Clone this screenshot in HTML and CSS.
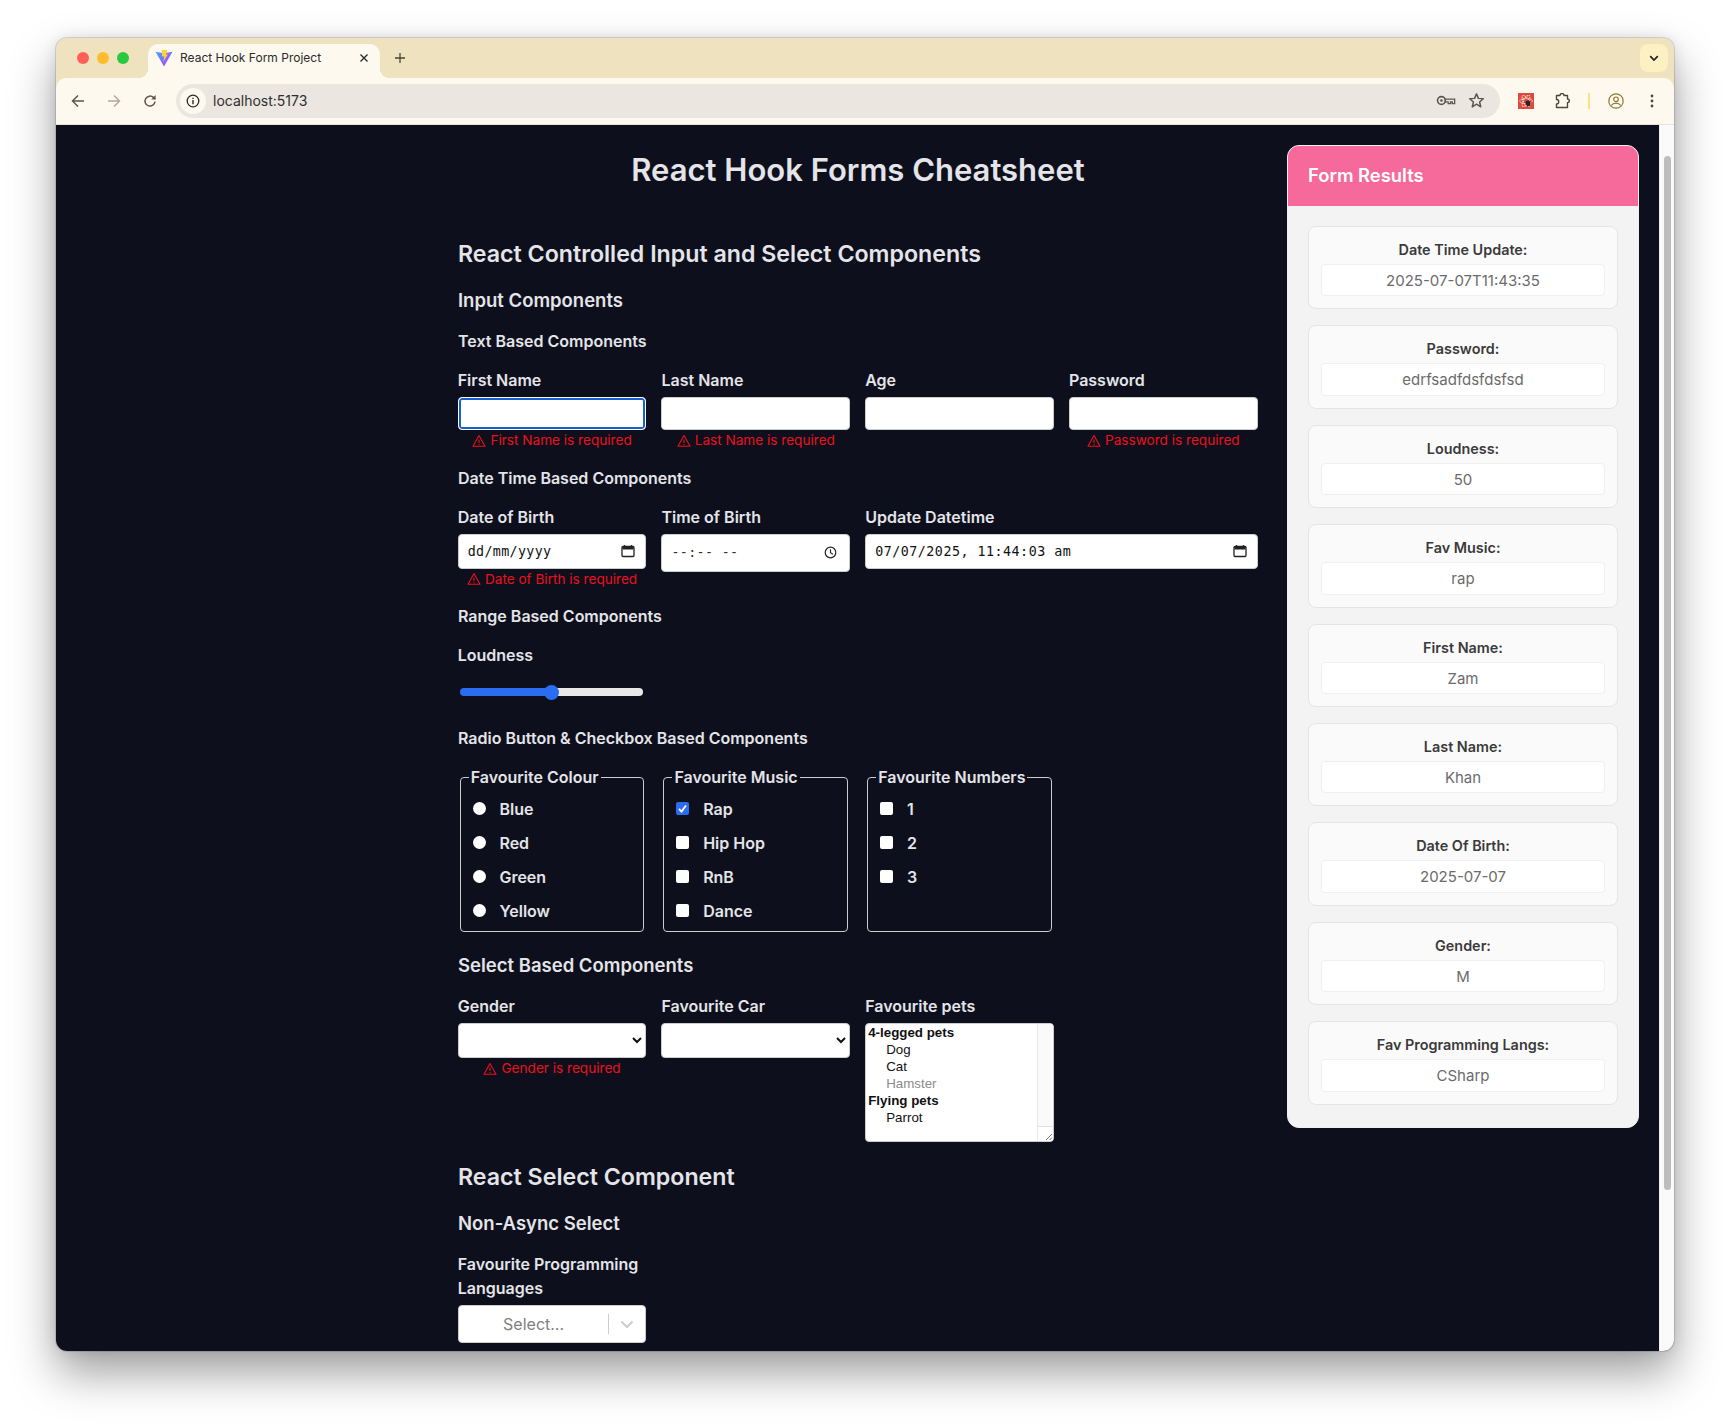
FILE: index.html
```html
<!DOCTYPE html>
<html lang="en">
<head>
    <meta charset="UTF-8">
    <meta name="viewport" content="width=device-width, initial-scale=1.0">
    <title>React Hook Form Project</title>
    <link rel="stylesheet" href="styles.css">
</head>
<body>

<svg class="icon-defs" width="0" height="0">
    <symbol id="warn" viewBox="0 0 14 14">
        <path d="M7 1.600 13 12.200H1Z" fill="none" stroke="currentColor" stroke-width="1.100" stroke-linejoin="round"/>
        <path d="M7 5.400v3.600M7 10v1" fill="none" stroke="currentColor" stroke-width="1.100"/>
    </symbol>
    <symbol id="calendar" viewBox="0 0 14 14">
        <path d="M2 2.500h10a1 1 0 0 1 1 1v8a1 1 0 0 1-1 1H2a1 1 0 0 1-1-1v-8a1 1 0 0 1 1-1Z" fill="none" stroke="#222" stroke-width="1.300"/>
        <path d="M1.500 3h11v2.500h-11Z" fill="#222"/>
        <path d="M3.500 1v2M10.500 1v2" stroke="#222" stroke-width="1.300"/>
    </symbol>
</svg>

<div class="window">
    <div class="tabstrip">
        <div class="lights">
            <span class="light light-red"></span>
            <span class="light light-yellow"></span>
            <span class="light light-green"></span>
        </div>
        <div class="tab">
            <svg class="favicon" width="18" height="18" viewBox="0 0 17 17">
                <defs>
                    <linearGradient id="vite-a" x1="0" y1="0" x2="1" y2="1">
                        <stop offset="0" stop-color="#41a6ff"/>
                        <stop offset="1" stop-color="#bd34fe"/>
                    </linearGradient>
                </defs>
                <path d="M.5 2.500 8.500 4l8-1.500-8 14Z" fill="url(#vite-a)"/>
                <path d="M6.200 1h5.600l-1.600 4.500 2-.6-4.400 7.200 1-5.300-2 .4Z" fill="#ffd62e"/>
            </svg>
            <span class="tab-title">React Hook Form Project</span>
            <svg class="tab-close" width="10" height="10" viewBox="0 0 10 10">
                <path d="M1.500 1.500l7 7M8.500 1.500l-7 7" stroke="#2b2b2b" stroke-width="1.400"/>
            </svg>
        </div>
        <svg class="new-tab" width="12" height="12" viewBox="0 0 12 12">
            <path d="M6 1v10M1 6h10" stroke="#4a4636" stroke-width="1.300"/>
        </svg>
        <div class="tab-search">
            <svg width="10" height="7" viewBox="0 0 10 7">
                <path d="M1.200 1.200 5 5l3.800-3.800" fill="none" stroke="#222" stroke-width="1.700"/>
            </svg>
        </div>
    </div>

    <div class="toolbar">
        <svg class="nav-icon" width="14" height="14" viewBox="0 0 14 14">
            <path d="M13 7H2M7 1.500 1.500 7 7 12.500" fill="none" stroke="#5c5845" stroke-width="1.500"/>
        </svg>
        <svg class="nav-icon" width="14" height="14" viewBox="0 0 14 14">
            <path d="M1 7h11M7 1.500 12.500 7 7 12.500" fill="none" stroke="#b0ac9c" stroke-width="1.500"/>
        </svg>
        <svg class="nav-icon" width="14" height="14" viewBox="0 0 14 14">
            <path d="M12 7.500A5 5 0 1 1 10.400 3.400L12.200 5" fill="none" stroke="#5c5845" stroke-width="1.500"/>
            <path d="M12.600 1v4.400H8.200Z" fill="#5c5845"/>
        </svg>
        <div class="address">
            <span class="site-info">
                <svg width="14" height="14" viewBox="0 0 14 14">
                    <circle cx="7" cy="7" r="5.800" fill="none" stroke="#2c2c2c" stroke-width="1.300"/>
                    <path d="M7 6v4.200M7 3.700v1.200" stroke="#2c2c2c" stroke-width="1.400"/>
                </svg>
            </span>
            <span class="url">localhost:5173</span>
            <svg class="key-icon" width="20" height="13" viewBox="0 0 18 12">
                <circle cx="4.800" cy="6" r="3.600" fill="none" stroke="#5b5750" stroke-width="1.500"/>
                <circle cx="4.800" cy="6" r="1.200" fill="#5b5750"/>
                <path d="M8.400 4.800h8.600v4h-2.200V7.200h-1.600v1.600h-2.200V7.200H8.400Z" fill="none" stroke="#5b5750" stroke-width="1.200"/>
            </svg>
            <svg class="star-icon" width="17" height="17" viewBox="0 0 16 16">
                <path d="M8 1.800 9.800 6l4.600.4-3.500 3 1.100 4.500L8 11.500l-4 2.400 1.100-4.500-3.500-3L6.200 6Z" fill="none" stroke="#5b5750" stroke-width="1.400" stroke-linejoin="round"/>
            </svg>
        </div>
        <svg class="ext-icon" width="16" height="16" viewBox="0 0 16 16">
            <rect width="16" height="16" fill="#dd4b3f"/>
            <ellipse cx="8" cy="8" rx="6.300" ry="2.600" fill="none" stroke="#fbdcd8" stroke-width="1" stroke-dasharray="1.500 .8"/>
            <ellipse cx="8" cy="8" rx="6.300" ry="2.600" fill="none" stroke="#fbdcd8" stroke-width="1" stroke-dasharray="1.500 .8" transform="rotate(60 8 8)"/>
            <ellipse cx="8" cy="8" rx="6.300" ry="2.600" fill="none" stroke="#fbdcd8" stroke-width="1" stroke-dasharray="1.500 .8" transform="rotate(120 8 8)"/>
            <path d="M7.500 8.500l3-1.500 2 2-.5 4-2.500.5-2-2.500Z" fill="#2b2320"/>
        </svg>
        <svg class="puzzle-icon" width="16" height="16" viewBox="0 0 16 16">
            <path d="M1.500 2.500h3.500a2 2 0 0 1 4 0h3.500v3.500a1.800 1.800 0 0 1 0 3.600v4.900h-11v-3.500a2 2 0 0 0 0-4.500Z" fill="none" stroke="#4c4a35" stroke-width="1.400" stroke-linejoin="round"/>
        </svg>
        <span class="toolbar-divider"></span>
        <svg class="avatar-icon" width="16" height="16" viewBox="0 0 16 16">
            <circle cx="8" cy="8" r="7.200" fill="none" stroke="#8c7a36" stroke-width="1.200"/>
            <circle cx="8" cy="6.300" r="2.300" fill="none" stroke="#8c7a36" stroke-width="1.200"/>
            <path d="M3.300 12.500c1.200-1.800 3-2.300 4.700-2.300s3.500.5 4.700 2.300" fill="none" stroke="#8c7a36" stroke-width="1.200"/>
        </svg>
        <svg class="menu-icon" width="4" height="14" viewBox="0 0 4 14">
            <circle cx="2" cy="2" r="1.400" fill="#4c4a35"/>
            <circle cx="2" cy="7" r="1.400" fill="#4c4a35"/>
            <circle cx="2" cy="12" r="1.400" fill="#4c4a35"/>
        </svg>
    </div>

    <div class="page">
        <main class="form-col">
            <h1>React Hook Forms Cheatsheet</h1>

            <h2>React Controlled Input and Select Components</h2>
            <h3>Input Components</h3>

            <h4>Text Based Components</h4>
            <div class="field-grid">
                <div class="field">
                    <label>First Name</label>
                    <input class="text-input is-focused" type="text">
                    <p class="error"><svg width="14" height="14"><use href="#warn"/></svg>First Name is required</p>
                </div>
                <div class="field">
                    <label>Last Name</label>
                    <input class="text-input" type="text">
                    <p class="error"><svg width="14" height="14"><use href="#warn"/></svg>Last Name is required</p>
                </div>
                <div class="field">
                    <label>Age</label>
                    <input class="text-input" type="text">
                </div>
                <div class="field">
                    <label>Password</label>
                    <input class="text-input" type="password">
                    <p class="error"><svg width="14" height="14"><use href="#warn"/></svg>Password is required</p>
                </div>
            </div>

            <h4>Date Time Based Components</h4>
            <div class="field-grid">
                <div class="field">
                    <label>Date of Birth</label>
                    <div class="date-input"><span>dd/mm/yyyy</span><svg width="14" height="14"><use href="#calendar"/></svg></div>
                    <p class="error"><svg width="14" height="14"><use href="#warn"/></svg>Date of Birth is required</p>
                </div>
                <div class="field">
                    <label>Time of Birth</label>
                    <div class="date-input time-input">
                        <span class="time-blank">--:-- --</span>
                        <svg width="13" height="13" viewBox="0 0 13 13">
                            <circle cx="6.500" cy="6.500" r="5.300" fill="none" stroke="#222" stroke-width="1.200"/>
                            <path d="M6.500 3.200v3.500l2.500 1.500" fill="none" stroke="#222" stroke-width="1.100"/>
                        </svg>
                    </div>
                </div>
                <div class="field field-wide">
                    <label>Update Datetime</label>
                    <div class="date-input date-filled"><span>07/07/2025, 11:44:03 am</span><svg width="14" height="14"><use href="#calendar"/></svg></div>
                </div>
            </div>

            <h4>Range Based Components</h4>
            <div class="field-grid">
                <div class="field range-field">
                    <label>Loudness</label>
                    <input class="range" type="range" min="0" max="100" value="50">
                </div>
            </div>

            <h4>Radio Button &amp; Checkbox Based Components</h4>
            <div class="field-grid">
                <fieldset class="group">
                    <legend>Favourite Colour</legend>
                    <label class="option"><input type="radio" name="colour"><span>Blue</span></label>
                    <label class="option"><input type="radio" name="colour"><span>Red</span></label>
                    <label class="option"><input type="radio" name="colour"><span>Green</span></label>
                    <label class="option"><input type="radio" name="colour"><span>Yellow</span></label>
                </fieldset>
                <fieldset class="group">
                    <legend>Favourite Music</legend>
                    <label class="option"><input type="checkbox" checked><span>Rap</span></label>
                    <label class="option"><input type="checkbox"><span>Hip Hop</span></label>
                    <label class="option"><input type="checkbox"><span>RnB</span></label>
                    <label class="option"><input type="checkbox"><span>Dance</span></label>
                </fieldset>
                <fieldset class="group">
                    <legend>Favourite Numbers</legend>
                    <label class="option"><input type="checkbox"><span>1</span></label>
                    <label class="option"><input type="checkbox"><span>2</span></label>
                    <label class="option"><input type="checkbox"><span>3</span></label>
                </fieldset>
            </div>

            <h3 class="select-heading">Select Based Components</h3>
            <div class="field-grid">
                <div class="field">
                    <label>Gender</label>
                    <select class="select-input"><option></option></select>
                    <p class="error"><svg width="14" height="14"><use href="#warn"/></svg>Gender is required</p>
                </div>
                <div class="field">
                    <label>Favourite Car</label>
                    <select class="select-input"><option></option></select>
                </div>
                <div class="field">
                    <label>Favourite pets</label>
                    <div class="listbox">
                        <div class="listbox-items">
                            <div class="list-group">4-legged pets</div>
                            <div class="list-item">Dog</div>
                            <div class="list-item">Cat</div>
                            <div class="list-item is-disabled">Hamster</div>
                            <div class="list-group">Flying pets</div>
                            <div class="list-item">Parrot</div>
                        </div>
                        <div class="listbox-track">
                            <div class="listbox-resizer">
                                <svg width="10" height="10" viewBox="0 0 10 10">
                                    <path d="M9 3 3 9M9 6.500 6.500 9" stroke="#777" stroke-width="1"/>
                                </svg>
                            </div>
                        </div>
                    </div>
                </div>
            </div>

            <h2 class="react-select-heading">React Select Component</h2>
            <h3>Non-Async Select</h3>
            <div class="field-grid">
                <div class="field">
                    <label class="label-lang">Favourite Programming Languages</label>
                    <div class="react-select">
                        <span class="react-select-value">Select...</span>
                        <span class="react-select-sep"></span>
                        <svg class="react-select-arrow" width="20" height="20" viewBox="0 0 20 20">
                            <path d="M4.500 7.500 10 13l5.500-5.500" fill="none" stroke="#ccc" stroke-width="2"/>
                        </svg>
                    </div>
                </div>
            </div>
        </main>

        <aside class="results">
            <div class="results-head">Form Results</div>
            <div class="results-body">
                <div class="result-card"><div class="result-label">Date Time Update:</div><div class="result-value">2025-07-07T11:43:35</div></div>
                <div class="result-card"><div class="result-label">Password:</div><div class="result-value">edrfsadfdsfdsfsd</div></div>
                <div class="result-card"><div class="result-label">Loudness:</div><div class="result-value">50</div></div>
                <div class="result-card"><div class="result-label">Fav Music:</div><div class="result-value">rap</div></div>
                <div class="result-card"><div class="result-label">First Name:</div><div class="result-value">Zam</div></div>
                <div class="result-card"><div class="result-label">Last Name:</div><div class="result-value">Khan</div></div>
                <div class="result-card"><div class="result-label">Date Of Birth:</div><div class="result-value">2025-07-07</div></div>
                <div class="result-card"><div class="result-label">Gender:</div><div class="result-value">M</div></div>
                <div class="result-card"><div class="result-label">Fav Programming Langs:</div><div class="result-value">CSharp</div></div>
            </div>
        </aside>

        <div class="scrollbar"><div class="scrollbar-thumb"></div></div>
    </div>
</div>

</body>
</html>
```

FILE: styles.css
```css
* {
    box-sizing: border-box;
}

html, body {
    margin: 0;
    height: 1426px;
    overflow: hidden;
    background-color: #fff;
}

body {
    padding: 38px 56px 0;
    font-family: Inter, "Liberation Sans", sans-serif;
}

.icon-defs {
    position: absolute;
}

.window {
    height: 1313px;
    border-radius: 11px;
    overflow: hidden;
    background-color: #eee2bf;
    box-shadow: 0 22px 45px rgba(0, 0, 0, 0.38), 0 0 14px rgba(0, 0, 0, 0.1), 0 0 0 1px rgba(0, 0, 0, 0.12);
}

/* browser chrome */
.tabstrip {
    display: flex;
    align-items: flex-end;
    height: 40px;
    position: relative;
}

.lights {
    display: flex;
    gap: 8px;
    align-self: center;
    margin: 0 0 0 21px;
}

.light {
    width: 12px;
    height: 12px;
    border-radius: 50%;
}

.light-red { background-color: #ff5f57; }
.light-yellow { background-color: #febc2e; }
.light-green { background-color: #28c840; }

.tab {
    position: relative;
    display: flex;
    align-items: center;
    width: 232px;
    height: 34px;
    margin-left: 19px;
    padding: 0 11px 7px 7px;
    background-color: #fef9ef;
    border-radius: 10px 10px 0 0;
}

/* little flares where the tab meets the toolbar */
.tab::before,
.tab::after {
    content: "";
    position: absolute;
    bottom: 0;
    width: 10px;
    height: 10px;
}

.tab::before {
    left: -10px;
    background: radial-gradient(circle at 0 0, transparent 10px, #fef9ef 10.5px);
}

.tab::after {
    right: -10px;
    background: radial-gradient(circle at 100% 0, transparent 10px, #fef9ef 10.5px);
}

.favicon {
    flex: none;
}

.tab-title {
    flex: 1;
    margin-left: 7px;
    font-size: 12px;
    color: #2b2b2b;
    white-space: nowrap;
}

.new-tab {
    align-self: center;
    margin-left: 14px;
}

.tab-search {
    position: absolute;
    right: 6px;
    top: 6px;
    display: flex;
    align-items: center;
    justify-content: center;
    width: 28px;
    height: 28px;
    border-radius: 8px;
    background-color: #fdf1c4;
}

.toolbar {
    display: flex;
    align-items: center;
    height: 47px;
    padding-bottom: 1px;
    background-color: #fef9ef;
    border-bottom: 1px solid #e8e3d6;
    border-radius: 10px 10px 0 0;
}

.nav-icon {
    flex: none;
    margin-left: 15px;
    margin-right: 7px;
}

.address {
    display: flex;
    align-items: center;
    width: 1324px;
    height: 34px;
    margin-left: 12px;
    padding: 0 15px 0 4px;
    border-radius: 17px;
    background-color: #ebe6e0;
}

.site-info {
    display: flex;
    align-items: center;
    justify-content: center;
    width: 26px;
    height: 26px;
    border-radius: 50%;
    background-color: #fef9ef;
}

.url {
    flex: 1;
    margin-left: 7px;
    font-size: 14px;
    color: #2f2f2f;
}

.star-icon {
    margin-left: 12px;
}

.ext-icon {
    margin-left: 18px;
}

.puzzle-icon {
    margin-left: 21px;
}

.toolbar-divider {
    width: 2px;
    height: 16px;
    margin-left: 17px;
    background-color: #f9e08a;
}

.avatar-icon {
    margin-left: 18px;
}

.menu-icon {
    margin-left: 26px;
}

/* page */
.page {
    display: flex;
    height: 1226px;
    overflow: hidden;
    background-color: #0d101c;
    color: #e4e4e9;
}

.form-col {
    flex: none;
    width: 800px;
    margin-left: 402px;
    padding-top: 27px;
}

h1, h2, h3, h4, p {
    margin: 0;
}

h1 {
    font-size: 31px;
    line-height: 36px;
    font-weight: 600;
    text-align: center;
}

h2 {
    margin-top: 50px;
    font-size: 23.2px;
    line-height: 32px;
    font-weight: 600;
}

h3 {
    margin-top: 16px;
    font-size: 18.5px;
    line-height: 28px;
    font-weight: 600;
}

h4 {
    margin-top: 15px;
    font-size: 16px;
    line-height: 24px;
    font-weight: 600;
}

.select-heading {
    margin-top: 19px;
}

.react-select-heading {
    margin-top: 19px;
}

.field-grid {
    display: grid;
    grid-template-columns: repeat(4, 188.75px);
    gap: 15px;
    margin-top: 15px;
    margin-left: -0.3px;
}

.field {
    min-width: 0;
}

.field-wide {
    grid-column: span 2;
}

.field label {
    display: block;
    margin-bottom: 5px;
    font-size: 16px;
    line-height: 24px;
    font-weight: 600;
}

.text-input {
    display: block;
    width: 100%;
    height: 33px;
    background-color: #fff;
    border: 1px solid #ccc;
    border-radius: 4px;
}

.is-focused {
    border-color: #fff;
    outline: none;
    box-shadow: inset 0 0 0 2px #1a5fd0;
}

.error {
    display: flex;
    align-items: center;
    justify-content: center;
    gap: 4px;
    margin-top: 1px;
    font-size: 13.6px;
    line-height: 19.5px;
    color: #ee0f1c;
}

.date-input {
    display: flex;
    align-items: center;
    justify-content: space-between;
    height: 35px;
    padding: 0 10px 0 9px;
    background-color: #fff;
    border: 1px solid #ccc;
    border-radius: 4px;
    font-family: "DejaVu Sans Mono", "Liberation Mono", monospace;
    font-size: 13.33px;
    letter-spacing: 0.35px;
    color: #111;
}

.date-filled {
    letter-spacing: 0.5px;
}

.time-input {
    height: 38px;
    padding-right: 12px;
}

.time-blank {
    color: #333;
}

.range-field label {
    margin-bottom: 0;
}

.range-field {
    height: 68px;
}

.range {
    -webkit-appearance: none;
    appearance: none;
    display: block;
    width: 182.5px;
    height: 8px;
    margin: 21px 0 0 2.5px;
    border-radius: 4px;
    background: linear-gradient(to right, #2a6df0 50%, #e8e8e8 50%);
}

.range::-webkit-slider-thumb {
    -webkit-appearance: none;
    appearance: none;
    width: 15px;
    height: 15px;
    border-radius: 50%;
    background-color: #2a6df0;
}

.group {
    margin: 0 2px;
    min-width: 0;
    padding: 8px;
    border: 1px solid #ccc;
    border-radius: 4px;
}

.group legend {
    padding: 0 2px;
    font-size: 16px;
    line-height: 24px;
    font-weight: 600;
}

.option {
    display: flex;
    align-items: center;
    gap: 14px;
    height: 24px;
    margin-left: 3.7px;
    font-size: 16px;
    font-weight: 600;
}

.option + .option {
    margin-top: 10px;
}

.option input {
    flex: none;
    width: 13px;
    height: 13px;
    margin: 0 0 2px;
    -webkit-appearance: none;
    appearance: none;
    background-color: #fff;
    border-radius: 2px;
}

.option input[type="radio"] {
    margin: 0 -0.8px 2px 0.8px;
    border-radius: 50%;
}

.option input:checked {
    background-color: #2a6df0;
    background-image: url("data:image/svg+xml,%3Csvg xmlns='http://www.w3.org/2000/svg' viewBox='0 0 13 13'%3E%3Cpath d='M3 6.800 5.500 9.500 10 3.500' fill='none' stroke='%23fff' stroke-width='1.800'/%3E%3C/svg%3E");
}

.select-input {
    display: block;
    width: 100%;
    height: 35px;
    background-color: #fff;
    border: 1px solid #ccc;
    border-radius: 4px;
    color: #111;
}

.listbox {
    display: flex;
    height: 119px;
    background-color: #fff;
    border: 1px solid #ccc;
    border-radius: 4px;
    overflow: hidden;
    font-family: "Liberation Sans", Arial, sans-serif;
    font-size: 13.33px;
    line-height: 17px;
    color: #111;
}

.listbox-items {
    flex: 1;
    padding-left: 2px;
}

.list-group {
    font-weight: 700;
}

.list-item {
    padding-left: 18px;
}

.is-disabled {
    color: #8c8c8c;
}

.listbox-track {
    position: relative;
    width: 16px;
    background-color: #fafafa;
    border-left: 1px solid #e8e8e8;
}

.listbox-resizer {
    position: absolute;
    right: 0;
    bottom: 0;
    display: flex;
    align-items: flex-end;
    justify-content: flex-end;
    width: 15px;
    height: 15px;
    background-color: #fff;
    border-top: 1px solid #e0e0e0;
}

.label-lang {
    line-height: 24px;
}

.react-select {
    display: flex;
    align-items: center;
    height: 38px;
    background-color: #fff;
    border: 1px solid #ccc;
    border-radius: 4px;
}

.react-select-value {
    flex: 1;
    text-align: center;
    font-size: 16px;
    color: #808080;
}

.react-select-sep {
    width: 1px;
    height: 20px;
    background-color: #ccc;
}

.react-select-arrow {
    margin: 0 8px;
}

/* results card */
.results {
    flex: none;
    align-self: flex-start;
    width: 352px;
    margin: 20px 20px 0 29px;
    border-radius: 12px;
    overflow: hidden;
    background-color: #f3f3f3;
    border: 1px solid #f0f0f0;
}

.results-head {
    height: 60px;
    padding-left: 20px;
    line-height: 59px;
    font-size: 18.4px;
    font-weight: 600;
    color: #fff;
    background-color: #f56a9b;
}

.results-body {
    display: flex;
    flex-direction: column;
    gap: 16px;
    padding: 20px 20px 22px;
}

.result-card {
    padding: 13px 12px 12px;
    background-color: #fafafa;
    border: 1px solid #e5e5e5;
    border-radius: 8px;
}

.result-label {
    margin-bottom: 4px;
    font-size: 14.4px;
    line-height: 20px;
    font-weight: 600;
    text-align: center;
    color: #3a3a3a;
}

.result-value {
    height: 32.4px;
    line-height: 31px;
    font-size: 15px;
    text-align: center;
    color: #6b6b6b;
    background-color: #fff;
    border: 1px solid #f0f0f0;
    border-radius: 4px;
}

.scrollbar {
    flex: none;
    width: 15px;
    padding: 31px 3px 0 4px;
    background-color: #fafafa;
    border-left: 1px solid #eee;
}

.scrollbar-thumb {
    height: 1034px;
    border-radius: 4px;
    background-color: #bdbdbd;
}
```
